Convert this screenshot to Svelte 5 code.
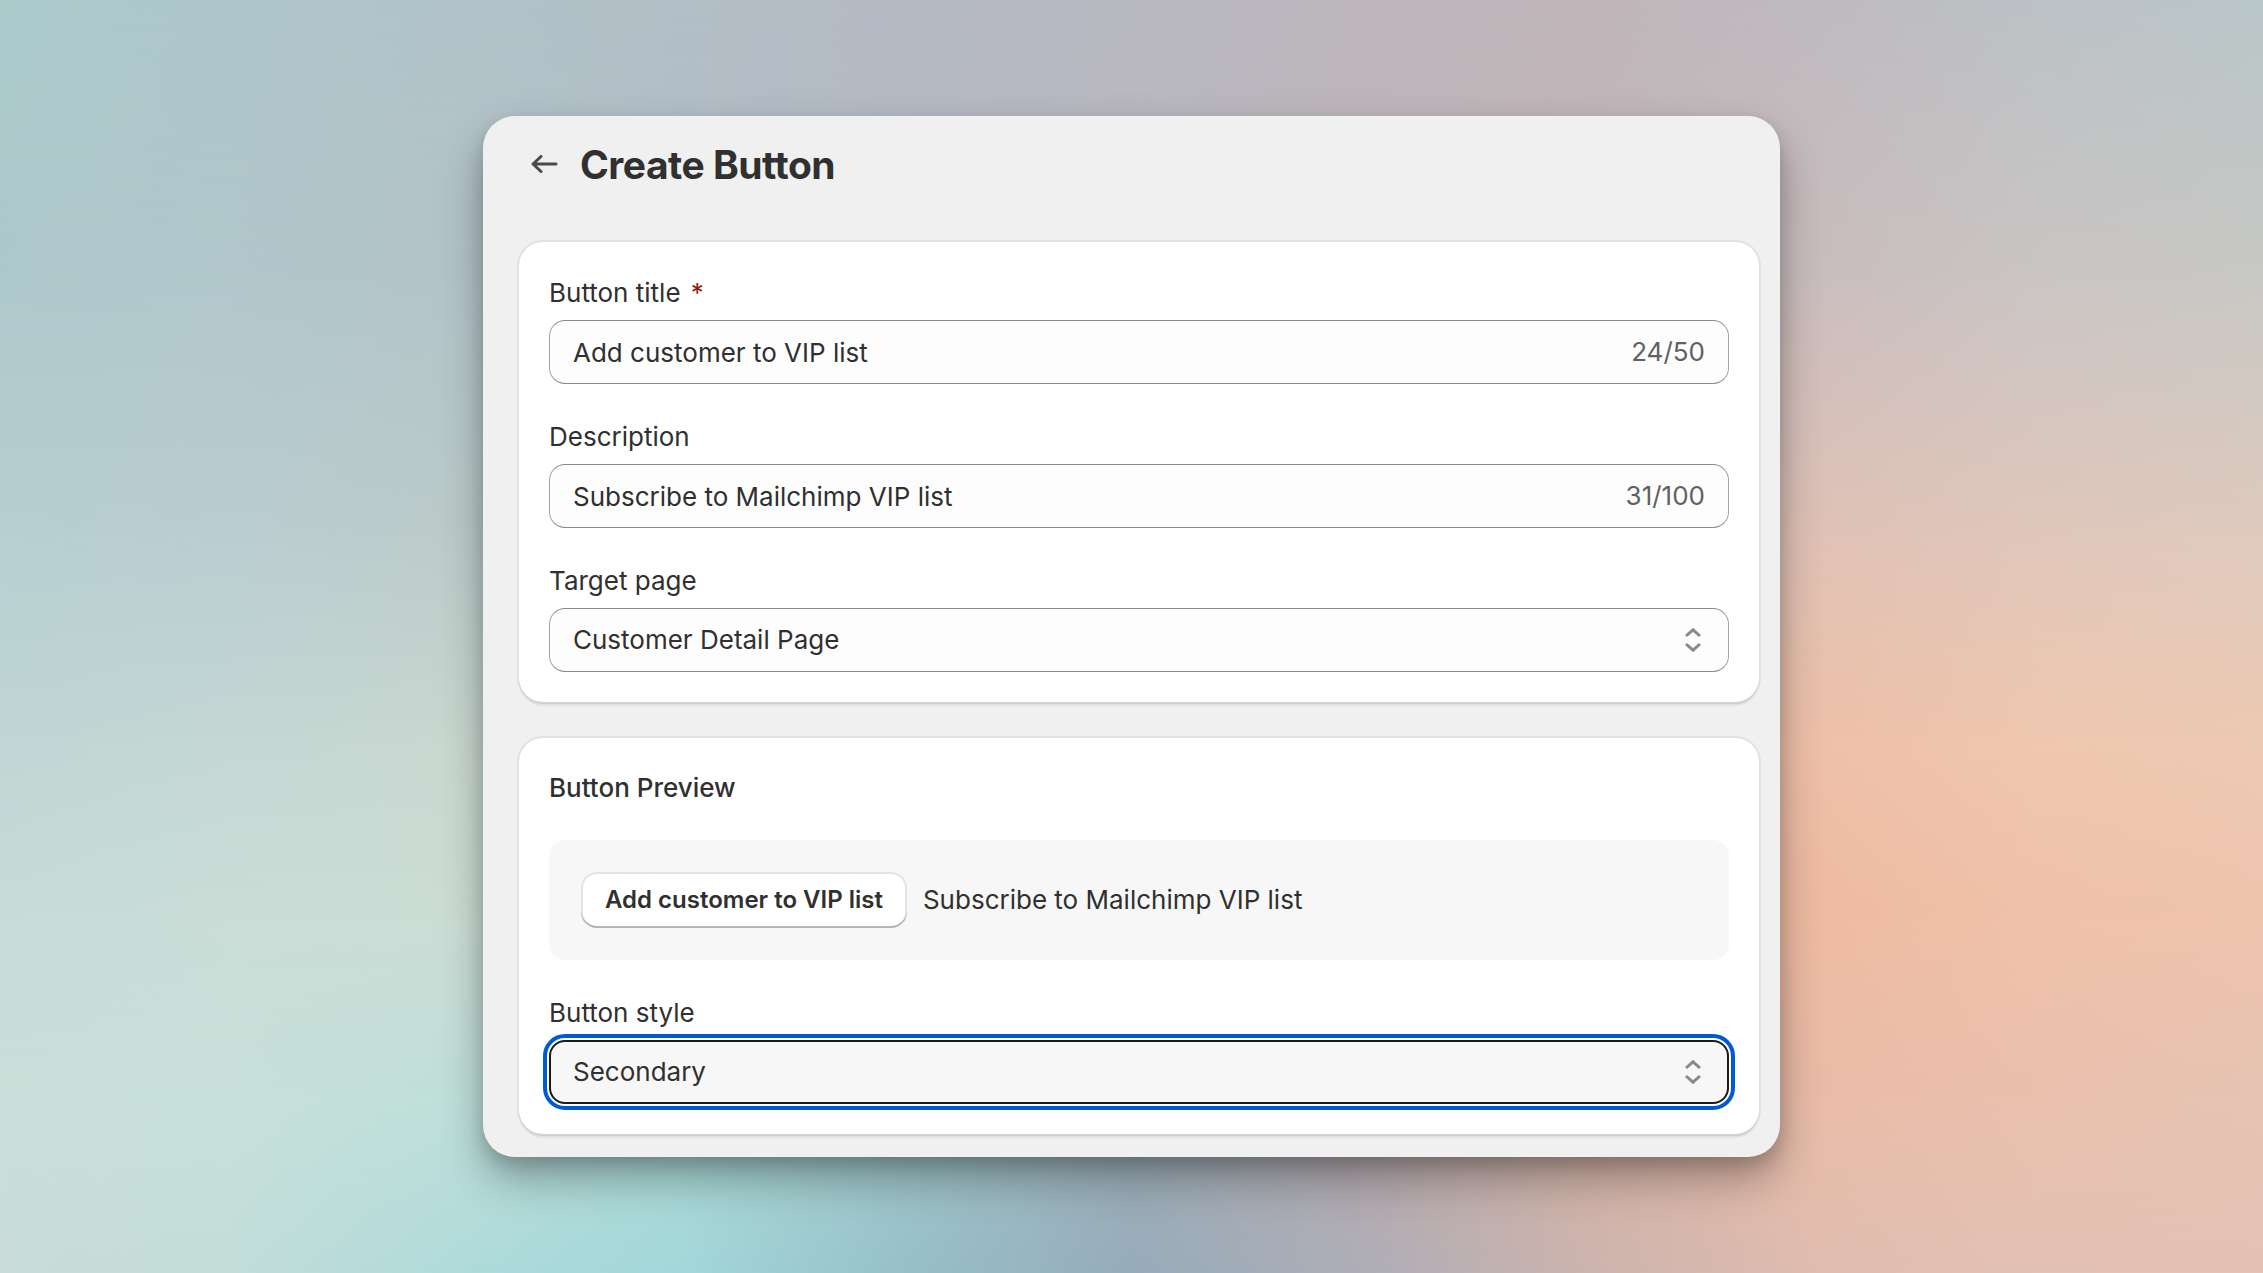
<script lang="ts">
	interface Band {
		from: number;
		to: number;
		colors: string[];
	}

	let title = $state('Add customer to VIP list');
	let description = $state('Subscribe to Mailchimp VIP list');
	let targetPage = $state('Customer Detail Page');
	let buttonStyle = $state('Secondary');

	const titleMax = 50;
	const descriptionMax = 100;
	const pages = ['Customer Detail Page', 'Order Detail Page', 'Product Detail Page'];
	const buttonStyles = ['Primary', 'Secondary', 'Plain'];

	const bands: Band[] = [
		{ from: 100, to: 100, colors: ['#c9dcda', '#c3ddd9', '#b0dbdb', '#a3d8da', '#97c0c9', '#97acba', '#aeaeb8', '#ccb4ae', '#e0bcb0', '#e3c1b4', '#e4c1b4'] },
		{ from: 86, to: 100, colors: ['#c9dfd9', '#c8e0da', '#c0dfd9', '#b0dad6', '#a4c8c8', '#a0b0b8', '#b8a9aa', '#d6b2a4', '#e9bca7', '#eac0ad', '#e7c3b3'] },
		{ from: 72, to: 86, colors: ['#c7dcd9', '#caddd7', '#ccddd5', '#c0d2cc', '#bccac6', '#c4c2bc', '#d2bdb0', '#e2bca8', '#efbaa1', '#efc2a9', '#efc4ad'] },
		{ from: 58, to: 72, colors: ['#c0d6d4', '#c4d7d4', '#c9d7d0', '#bfcec9', '#bcc8c6', '#c4c2bc', '#d0bdb2', '#e0beae', '#eec0a8', '#efc7af', '#edc9b2'] },
		{ from: 42, to: 58, colors: ['#b6cfd1', '#bacdd1', '#bccbc9', '#b5c4c8', '#b6bec4', '#bcb9bc', '#c6b9b8', '#d4bdb6', '#e0c2b6', '#e0c7bb', '#dfcabe'] },
		{ from: 22, to: 42, colors: ['#aec8cc', '#b1c7cc', '#b3c4c9', '#b2bec8', '#b5bac4', '#b9b7c0', '#bdb5b9', '#c2b7b9', '#cabdbe', '#cac5c4', '#c8c8c4'] },
		{ from: 0, to: 22, colors: ['#abcacc', '#aec6cb', '#b1c2c9', '#b2bec6', '#b4b9c3', '#b8b8c0', '#bcb6bc', '#bfb5b9', '#bebabf', '#bcc1c5', '#b9c6c8'] }
	];
</script>

{#snippet chevrons()}
	<svg class="chevrons" viewBox="0 0 16 24" fill="none" aria-hidden="true">
		<path d="M1 8 8 1.8 15 8M1 16 8 22.2 15 16" />
	</svg>
{/snippet}

<div class="stage">
	<div class="backdrop" aria-hidden="true">
		{#each bands as band}
			<div
				style:background="linear-gradient(to right, {band.colors.join(', ')})"
				style:mask-image={band.from < 100
					? `linear-gradient(to bottom, #000 ${band.from}%, transparent ${band.to}%)`
					: 'none'}
			></div>
		{/each}
	</div>

	<main class="panel">
		<header class="page-header">
			<button type="button" class="back" aria-label="Back">
				<svg viewBox="0 0 28 20" fill="none" aria-hidden="true">
					<path d="M26 9H3M11 1.5 3 9 11 16.5" />
				</svg>
			</button>
			<h1>Create Button</h1>
		</header>

		<form class="cards" onsubmit={(e) => e.preventDefault()}>
			<section class="card">
				<div class="field">
					<label for="title">Button title <span class="required">*</span></label>
					<div class="control">
						<input id="title" type="text" maxlength={titleMax} required bind:value={title} />
						<span class="count">{title.length}/{titleMax}</span>
					</div>
				</div>
				<div class="field">
					<label for="description">Description</label>
					<div class="control">
						<input id="description" type="text" maxlength={descriptionMax} bind:value={description} />
						<span class="count">{description.length}/{descriptionMax}</span>
					</div>
				</div>
				<div class="field">
					<label for="target">Target page</label>
					<div class="control">
						<select id="target" bind:value={targetPage}>
							{#each pages as page}
								<option>{page}</option>
							{/each}
						</select>
						{@render chevrons()}
					</div>
				</div>
			</section>

			<section class="card">
				<h2>Button Preview</h2>
				<div class="preview">
					<button type="button" class="preview-button">{title}</button>
					<span>{description}</span>
				</div>
				<div class="field">
					<label for="style">Button style</label>
					<div class="control focused">
						<select id="style" bind:value={buttonStyle}>
							{#each buttonStyles as style}
								<option>{style}</option>
							{/each}
						</select>
						{@render chevrons()}
					</div>
				</div>
			</section>
		</form>
	</main>
</div>

<style>
	:global(body) {
		margin: 0;
	}

	.stage {
		position: relative;
		display: flex;
		align-items: center;
		justify-content: center;
		box-sizing: border-box;
		min-height: 100vh;
		padding: 48px;
		color: #303030;
		font-family: Inter, 'Liberation Sans', sans-serif;
		font-size: 26px;
		line-height: 42px;
	}

	.backdrop,
	.backdrop div {
		position: absolute;
		inset: 0;
	}

	.panel {
		position: relative;
		box-sizing: border-box;
		width: 100%;
		max-width: 1297px;
		padding: 25px 21px 23px 36px;
		border-radius: 32px;
		background: #f0f0f0;
		box-shadow:
			0 22px 44px rgba(0, 0, 0, 0.3),
			0 8px 16px rgba(0, 0, 0, 0.14);
	}

	.page-header {
		display: flex;
		align-items: center;
		gap: 16px;
		margin-bottom: 53px;
	}

	.back {
		display: flex;
		padding: 12px 6px 12px 11px;
		border: 0;
		background: none;
		cursor: pointer;
	}

	.back svg {
		width: 28px;
		height: 20px;
		stroke: #4a4a4a;
		stroke-width: 3;
		stroke-linecap: round;
		stroke-linejoin: round;
	}

	h1 {
		margin: 0;
		font-size: 39px;
		font-weight: 700;
		line-height: 48px;
		letter-spacing: -0.0125em;
	}

	.cards {
		display: grid;
		gap: 36px;
	}

	.card {
		display: grid;
		gap: 32px;
		padding: 30px;
		border-radius: 24px;
		background: #fff;
		box-shadow:
			0 2px 0 #d0d0d0,
			0 0 0 2px #e1e1e1,
			0 4px 0 #e2e2e2;
	}

	h2 {
		margin: 0;
		font-size: 26px;
		font-weight: 550;
		line-height: 40px;
	}

	.field {
		display: grid;
		gap: 6px;
	}

	.required {
		margin-left: 3px;
		color: #8e1f0b;
	}

	.control {
		display: flex;
		align-items: center;
		box-sizing: border-box;
		height: 64px;
		padding: 0 23px;
		border: 1px solid #8a8a8a;
		border-inline-color: #a4a4a4;
		border-radius: 16px;
		background: #fdfdfd;
	}

	.control.focused {
		border: 2px solid #1a1a1a;
		padding: 0 22px;
		background: #f7f7f7;
		outline: 4px solid #005bd3;
		outline-offset: 2px;
	}

	input,
	select {
		flex: 1;
		min-width: 0;
		height: 100%;
		padding: 0;
		border: 0;
		outline: 0;
		appearance: none;
		background: none;
		color: inherit;
		font: inherit;
	}

	.count {
		color: #616161;
	}

	.chevrons {
		width: 16px;
		height: 24px;
		margin-right: 4px;
		stroke: #8a8a8a;
		stroke-width: 3;
		pointer-events: none;
	}

	.preview {
		display: flex;
		align-items: center;
		gap: 16px;
		padding: 32px;
		border-radius: 16px;
		background: #f7f7f7;
	}

	.preview-button {
		height: 56px;
		padding: 0 24px;
		border: 0;
		border-radius: 16px;
		background: #fff;
		box-shadow:
			inset 0 -2px 0 #b5b5b5,
			inset 0 0 0 2px #e3e3e3;
		color: inherit;
		font: inherit;
		font-size: 24px;
		font-weight: 600;
		cursor: pointer;
	}
</style>
